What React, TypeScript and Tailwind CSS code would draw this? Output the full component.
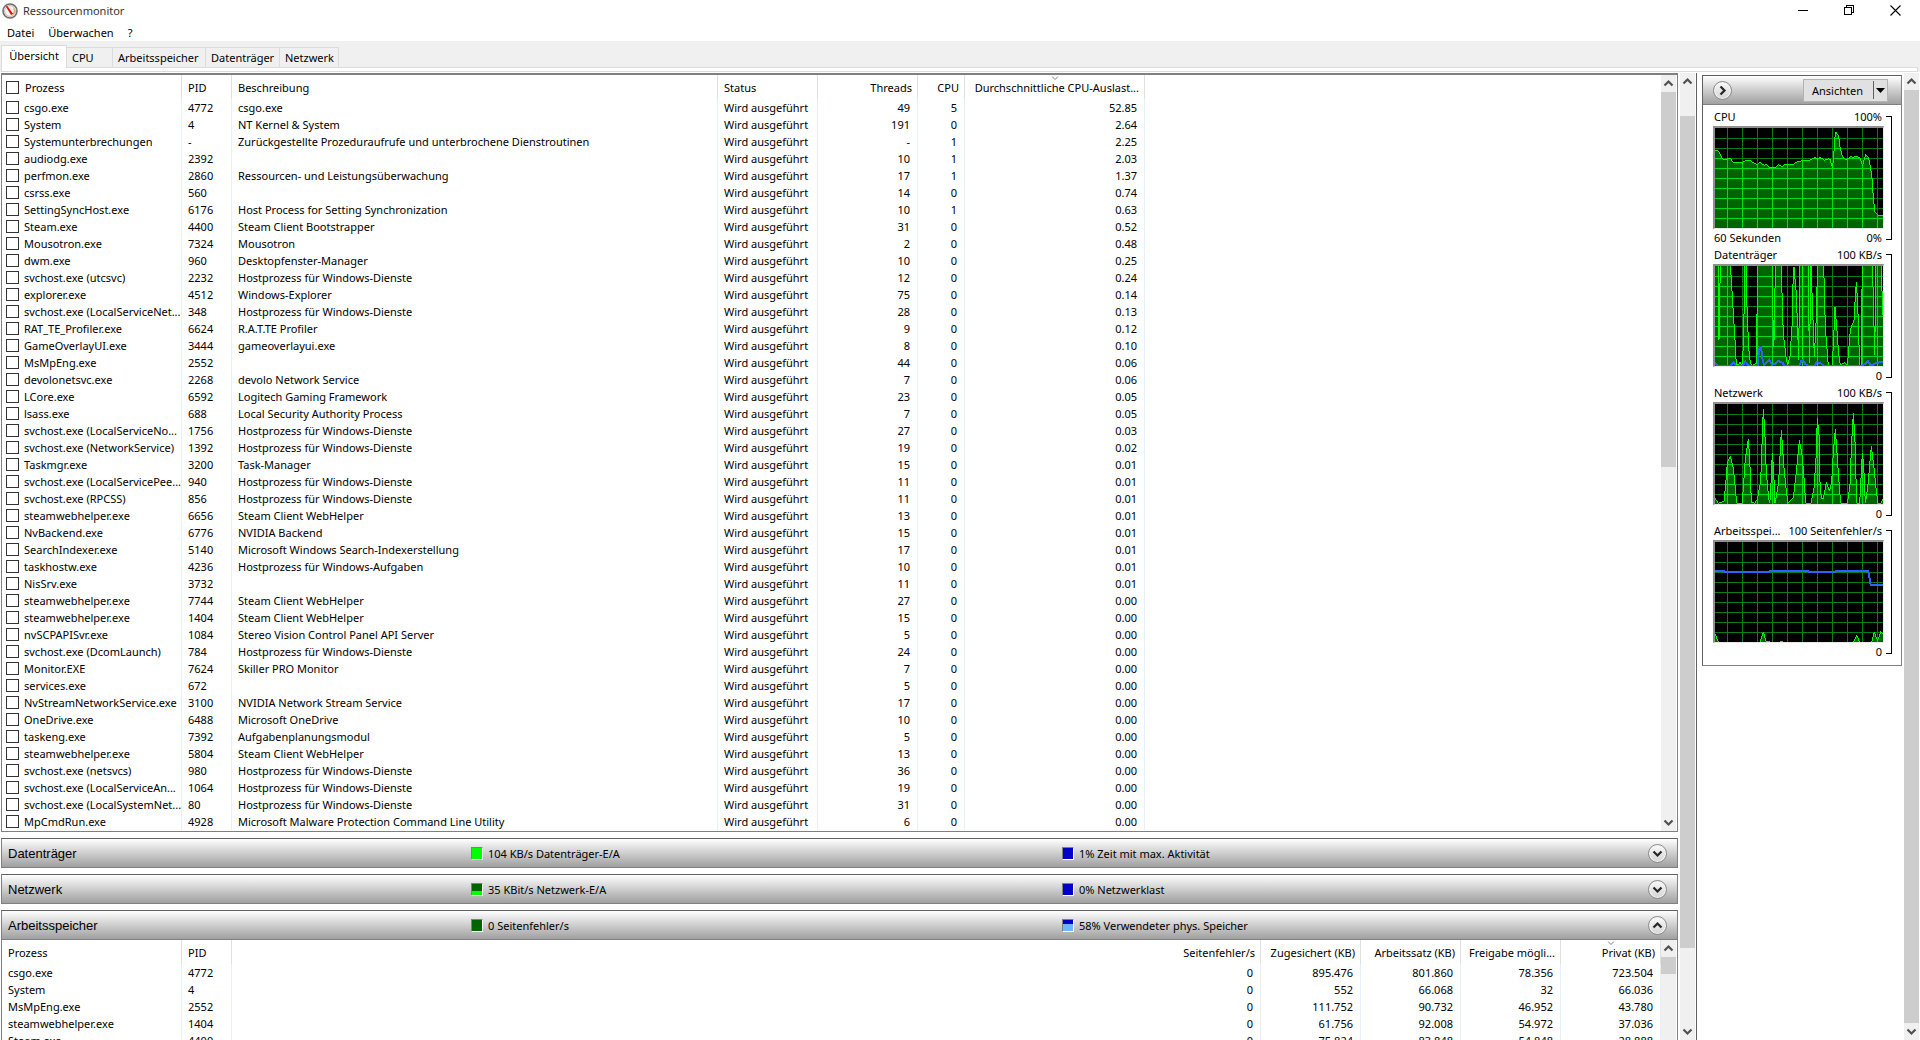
import type { ReactNode } from "react";

type Proc = [string, string, string, string, string, string];
const HP = "Hostprozess für Windows-Dienste";
const WH = "Steam Client WebHelper";

const processes: Proc[] = [
  ["csgo.exe", "4772", "csgo.exe", "49", "5", "52.85"],
  ["System", "4", "NT Kernel & System", "191", "0", "2.64"],
  ["Systemunterbrechungen", "-", "Zurückgestellte Prozeduraufrufe und unterbrochene Dienstroutinen", "-", "1", "2.25"],
  ["audiodg.exe", "2392", "", "10", "1", "2.03"],
  ["perfmon.exe", "2860", "Ressourcen- und Leistungsüberwachung", "17", "1", "1.37"],
  ["csrss.exe", "560", "", "14", "0", "0.74"],
  ["SettingSyncHost.exe", "6176", "Host Process for Setting Synchronization", "10", "1", "0.63"],
  ["Steam.exe", "4400", "Steam Client Bootstrapper", "31", "0", "0.52"],
  ["Mousotron.exe", "7324", "Mousotron", "2", "0", "0.48"],
  ["dwm.exe", "960", "Desktopfenster-Manager", "10", "0", "0.25"],
  ["svchost.exe (utcsvc)", "2232", HP, "12", "0", "0.24"],
  ["explorer.exe", "4512", "Windows-Explorer", "75", "0", "0.14"],
  ["svchost.exe (LocalServiceNet...", "348", HP, "28", "0", "0.13"],
  ["RAT_TE_Profiler.exe", "6624", "R.A.T.TE Profiler", "9", "0", "0.12"],
  ["GameOverlayUI.exe", "3444", "gameoverlayui.exe", "8", "0", "0.10"],
  ["MsMpEng.exe", "2552", "", "44", "0", "0.06"],
  ["devolonetsvc.exe", "2268", "devolo Network Service", "7", "0", "0.06"],
  ["LCore.exe", "6592", "Logitech Gaming Framework", "23", "0", "0.05"],
  ["lsass.exe", "688", "Local Security Authority Process", "7", "0", "0.05"],
  ["svchost.exe (LocalServiceNo...", "1756", HP, "27", "0", "0.03"],
  ["svchost.exe (NetworkService)", "1392", HP, "19", "0", "0.02"],
  ["Taskmgr.exe", "3200", "Task-Manager", "15", "0", "0.01"],
  ["svchost.exe (LocalServicePee...", "940", HP, "11", "0", "0.01"],
  ["svchost.exe (RPCSS)", "856", HP, "11", "0", "0.01"],
  ["steamwebhelper.exe", "6656", WH, "13", "0", "0.01"],
  ["NvBackend.exe", "6776", "NVIDIA Backend", "15", "0", "0.01"],
  ["SearchIndexer.exe", "5140", "Microsoft Windows Search-Indexerstellung", "17", "0", "0.01"],
  ["taskhostw.exe", "4236", "Hostprozess für Windows-Aufgaben", "10", "0", "0.01"],
  ["NisSrv.exe", "3732", "", "11", "0", "0.01"],
  ["steamwebhelper.exe", "7744", WH, "27", "0", "0.00"],
  ["steamwebhelper.exe", "1404", WH, "15", "0", "0.00"],
  ["nvSCPAPISvr.exe", "1084", "Stereo Vision Control Panel API Server", "5", "0", "0.00"],
  ["svchost.exe (DcomLaunch)", "784", HP, "24", "0", "0.00"],
  ["Monitor.EXE", "7624", "Skiller PRO Monitor", "7", "0", "0.00"],
  ["services.exe", "672", "", "5", "0", "0.00"],
  ["NvStreamNetworkService.exe", "3100", "NVIDIA Network Stream Service", "17", "0", "0.00"],
  ["OneDrive.exe", "6488", "Microsoft OneDrive", "10", "0", "0.00"],
  ["taskeng.exe", "7392", "Aufgabenplanungsmodul", "5", "0", "0.00"],
  ["steamwebhelper.exe", "5804", WH, "13", "0", "0.00"],
  ["svchost.exe (netsvcs)", "980", HP, "36", "0", "0.00"],
  ["svchost.exe (LocalServiceAn...", "1064", HP, "19", "0", "0.00"],
  ["svchost.exe (LocalSystemNet...", "80", HP, "31", "0", "0.00"],
  ["MpCmdRun.exe", "4928", "Microsoft Malware Protection Command Line Utility", "6", "0", "0.00"],
];

const memory = [
  ["csgo.exe", "4772", "0", "895.476", "801.860", "78.356", "723.504"],
  ["System", "4", "0", "552", "66.068", "32", "66.036"],
  ["MsMpEng.exe", "2552", "0", "111.752", "90.732", "46.952", "43.780"],
  ["steamwebhelper.exe", "1404", "0", "61.756", "92.008", "54.972", "37.036"],
  ["Steam.exe", "4400", "0", "75.824", "83.848", "54.848", "28.888"],
];

function Chevron({ dir, className = "text-[#505050]" }: { dir: "up" | "down" | "right"; className?: string }) {
  const d = { up: "M1.5 7.5 5.5 3.5 9.5 7.5", down: "M1.5 3.5 5.5 7.5 9.5 3.5", right: "M3.5 1.5 7.5 5.5 3.5 9.5" }[dir];
  return (
    <svg viewBox="0 0 11 11" className={`size-[11px] ${className}`} fill="none" stroke="currentColor" strokeWidth="2.2">
      <path d={d} />
    </svg>
  );
}

function SortMark() {
  return (
    <svg viewBox="0 0 7 4" className="absolute left-1/2 top-px h-1 w-[7px] -translate-x-1/2" fill="none" stroke="#808080">
      <path d="M.5 .5 3.5 3.5 6.5 .5" />
    </svg>
  );
}

function ScrollBar({ children, down = true }: { children: ReactNode; down?: boolean }) {
  return (
    <div className="flex w-[15px] shrink-0 flex-col bg-[#f0f0f0]">
      <button aria-label="Nach oben" className="grid h-[17px] shrink-0 place-items-center">
        <Chevron dir="up" />
      </button>
      <div className="flex min-h-0 flex-1 flex-col">{children}</div>
      {down && (
        <button aria-label="Nach unten" className="grid h-[17px] shrink-0 place-items-center">
          <Chevron dir="down" />
        </button>
      )}
    </div>
  );
}

function RoundButton({ dir, label }: { dir: "up" | "down" | "right"; label: string }) {
  return (
    <button
      aria-label={label}
      className="grid size-[19px] shrink-0 place-items-center rounded-full border border-[#8a8a8a] bg-linear-to-b from-[#fafafa] to-[#d4d4d4] shadow-[inset_0_0_0_1px_#f4f4f4]"
    >
      <Chevron dir={dir} className="text-[#262626]" />
    </button>
  );
}

const box = "block size-[13px] shrink-0 appearance-none border border-[#333] bg-white";
const headSep = "border-r border-[#e0e0e0]";
const bodySep = "border-r border-[#e6f0fa]";

function ProcessTable() {
  const right = ["Threads", "CPU", "Durchschnittliche CPU-Auslast..."];
  return (
    <div className="flex shrink-0 border border-t-2 border-[#808080] bg-white pr-px">
      <div className="min-w-0 flex-1 overflow-hidden pb-px">
        <table className="w-[1143px] table-fixed border-separate border-spacing-0 whitespace-nowrap">
          <colgroup>
            <col className="w-[180px]" />
            <col className="w-[50px]" />
            <col className="w-[486px]" />
            <col className="w-[100px]" />
            <col className="w-[100px]" />
            <col className="w-[47px]" />
            <col className="w-[180px]" />
          </colgroup>
          <thead>
            <tr className="h-6">
              <th className={`p-0 pl-1 text-left font-normal ${headSep}`}>
                <label className="flex items-center gap-1.5">
                  <input type="checkbox" className={box} />
                  Prozess
                </label>
              </th>
              {["PID", "Beschreibung", "Status"].map((h) => (
                <th key={h} className={`p-0 pl-1.5 text-left font-normal ${headSep}`}>{h}</th>
              ))}
              {right.map((h, i) => (
                <th key={h} className={`relative p-0 pr-[5px] text-right font-normal ${headSep}`}>
                  {i === 2 && <SortMark />}
                  {h}
                </th>
              ))}
            </tr>
          </thead>
          <tbody>
            {processes.map((p) => (
              <tr key={p[1]} className="h-[17px]">
                <td className={`p-0 pl-1 ${bodySep}`}>
                  <label className="flex items-center gap-[5px]">
                    <input type="checkbox" className={box} />
                    {p[0]}
                  </label>
                </td>
                <td className={`p-0 pl-1.5 ${bodySep}`}>{p[1]}</td>
                <td className={`p-0 pl-1.5 ${bodySep}`}>{p[2]}</td>
                <td className={`p-0 pl-1.5 ${bodySep}`}>Wird ausgeführt</td>
                {p.slice(3).map((v, i) => (
                  <td key={i} className={`p-0 pr-[7px] text-right ${bodySep}`}>{v}</td>
                ))}
              </tr>
            ))}
          </tbody>
        </table>
      </div>
      <ScrollBar>
        <div className="h-[52%] bg-[#cdcdcd]" />
      </ScrollBar>
    </div>
  );
}

function MemoryTable() {
  const heads = ["Seitenfehler/s", "Zugesichert (KB)", "Arbeitssatz (KB)", "Freigabe mögli...", "Privat (KB)"];
  return (
    <div className="flex min-h-0 flex-1 overflow-hidden border-x border-[#808080] bg-white pr-px">
      <div className="min-w-0 flex-1">
        <table className="w-full table-fixed border-separate border-spacing-0 whitespace-nowrap">
          <colgroup>
            <col className="w-[180px]" />
            <col className="w-[50px]" />
            <col />
            <col className="w-[100px]" />
            <col className="w-[100px]" />
            <col className="w-[100px]" />
            <col className="w-[100px]" />
          </colgroup>
          <thead>
            <tr className="h-6">
              {["Prozess", "PID"].map((h) => (
                <th key={h} className={`p-0 pl-1.5 text-left font-normal ${headSep}`}>{h}</th>
              ))}
              {heads.map((h, i) => (
                <th key={h} className={`relative p-0 pr-[5px] text-right font-normal ${headSep}`}>
                  {i === 4 && <SortMark />}
                  {h}
                </th>
              ))}
            </tr>
          </thead>
          <tbody>
            {memory.map((m) => (
              <tr key={m[0]} className="h-[17px]">
                {m.map((v, i) => (
                  <td key={i} className={i < 2 ? `p-0 pl-1.5 ${bodySep}` : `p-0 pr-[7px] text-right ${bodySep}`}>{v}</td>
                ))}
              </tr>
            ))}
          </tbody>
        </table>
      </div>
      <ScrollBar down={false}>
        <div className="h-[17px] bg-[#cdcdcd]" />
      </ScrollBar>
    </div>
  );
}

function Swatch({ base, level, fill }: { base: string; level: string; fill: string }) {
  return (
    <span className={`flex h-[13px] w-3 flex-col justify-end border border-[#808080] border-r-white border-b-white ${base}`}>
      <span className={`${level} ${fill}`} />
    </span>
  );
}

function Bar({ title, io, use, open = false }: { title: string; io: ReactNode; use: ReactNode; open?: boolean }) {
  return (
    <div className="grid h-[30px] shrink-0 grid-cols-[469fr_591fr_615fr] items-center border border-[#808080] border-t-[#606060] bg-linear-to-b from-white to-[#a0a0a0]">
      <h2 className="pl-1.5 font-['Liberation_Sans',sans-serif] text-[13px]">{title}</h2>
      <div className="flex items-center gap-[5px]">{io}</div>
      <div className="flex items-center justify-between pr-2.5">
        <div className="flex items-center gap-[5px]">{use}</div>
        <RoundButton dir={open ? "up" : "down"} label={`${title} ${open ? "zuklappen" : "aufklappen"}`} />
      </div>
    </div>
  );
}

interface GraphProps {
  id: string;
  title: string;
  max: string;
  left?: string;
  min: string;
  ox: number;
  oy: number;
  green: string;
  blue?: string;
}

const vertical = Array.from({ length: 11 }, (_, i) => 12 + i * 15);
const horizontal = Array.from({ length: 9 }, (_, i) => 10 + i * 10);

function Grid({ color, clip }: { color: string; clip?: string }) {
  return (
    <g fill={color} clipPath={clip}>
      {vertical.map((x) => <rect key={x} x={x} y="0" width="1" height="100" />)}
      {horizontal.map((y) => <rect key={y} x="0" y={y} width="168" height="1" />)}
    </g>
  );
}

function Graph({ id, title, max, left, min, ox, oy, green, blue }: GraphProps) {
  const area = `${ox},${oy + 310} ${green} ${ox + 510},${oy + 310}`;
  const t = `scale(0.33333) translate(${-ox} ${-oy})`;
  return (
    <section className="flex h-[138px] pl-[10px]">
      <div className="w-[171px]">
        <div className="flex h-[19px] items-center justify-between pl-px pr-0.5 whitespace-nowrap">
          <h3>{title}</h3>
          <span>{max}</span>
        </div>
        <div className="h-[103px] border-t-2 border-l-2 border-r border-b border-[#909090] border-r-[#e8e8e8] border-b-[#e8e8e8] bg-black">
          <svg viewBox="0 0 168 100" className="block size-full" preserveAspectRatio="none" shapeRendering="crispEdges">
            <clipPath id={id}>
              <polygon points={area} transform={t} />
            </clipPath>
            <Grid color="#0a7d14" />
            <polygon points={area} transform={t} fill="#006400" />
            <Grid color="#00dc1e" clip={`url(#${id})`} />
            <polyline points={green} transform={t} fill="none" stroke="#00ff00" strokeWidth="3" />
            {blue && <polyline points={blue} transform={t} fill="none" stroke="#2f62ff" strokeWidth="6" />}
          </svg>
        </div>
        <div className="flex h-4 items-center justify-between pl-px pr-0.5">
          <span>{left}</span>
          <span>{min}</span>
        </div>
      </div>
      <div className="mt-[9px] ml-0.5 h-[124px] w-1.5 border border-l-0 border-black" />
    </section>
  );
}

const cpuLine =
  "345,452 355,452 365,473 373,480 390,474 402,489 420,489 438,482 450,482 472,494 481,487 492,496 500,494 508,503 526,503 535,494 545,500 555,494 580,493 590,486 608,482 630,480 643,473 652,475 663,473 673,481 685,476 690,478 697,503 700,480 703,440 706,395 716,407 720,440 727,468 735,478 745,476 752,470 760,472 770,469 780,474 788,498 792,480 797,463 806,474 812,505 817,540 819,580 824,635 830,643 840,648 852,646";
const diskLine =
  "13,17 25,17 27,240 31,17 61,17 64,60 70,160 75,240 79,317 86,312 90,307 96,317 100,260 105,17 108,17 112,180 118,290 124,317 140,310 142,17 187,17 190,260 193,230 196,17 214,17 218,180 222,240 228,290 233,317 240,290 246,200 250,30 252,20 258,90 262,180 266,300 269,17 277,17 278,300 279,17 295,17 298,310 303,17 308,150 313,290 320,150 322,17 341,17 346,200 352,280 355,317 366,317 370,260 375,140 380,200 386,280 391,317 400,310 406,308 412,317 421,210 432,180 436,110 439,66 443,130 449,317 453,317 457,17 487,17 490,110 494,285 498,17 513,17 519,165";
const diskBlue =
  "15,306 22,317 62,317 70,307 78,317 98,317 106,305 116,317 143,317 145,290 149,262 153,262 158,300 162,314 172,306 178,300 186,314 196,312 204,302 210,306 218,308 222,317 268,317 274,303 278,300 286,312 294,317 314,317 320,307 330,308 340,317 455,317 465,312 474,303 482,317 490,314 498,308 519,307";
const netLine =
  "15,300 25,316 42,309 47,260 52,195 61,175 70,210 75,260 80,316 96,316 100,270 106,180 115,124 119,180 124,312 134,316 142,305 152,250 157,110 160,33 164,90 169,225 175,290 178,316 181,300 187,165 191,220 195,316 200,290 206,250 214,97 222,210 228,270 234,316 250,300 258,230 264,170 268,127 276,170 281,225 287,316 303,316 312,270 318,180 322,60 327,110 330,250 334,300 340,303 349,253 358,280 365,255 370,160 376,94 382,180 386,240 392,316 412,316 420,260 425,130 430,45 435,130 440,316 449,316 453,240 457,165 461,200 466,316 474,260 484,144 492,210 498,270 504,316 512,316 519,303";
const memLine =
  "75,372 86,397 210,397 220,366 229,397 234,393 240,397 270,397 275,393 280,397 490,397 500,376 509,397 545,397 553,366 561,388 566,385 572,364 580,372";
const memBlue =
  "75,184 103,184 104,187 238,187 240,184 355,184 356,187 436,187 437,184 534,184 538,200 542,225 580,225";

export default function App() {
  return (
    <div className="flex h-screen flex-col overflow-hidden bg-white font-['Noto_Sans',sans-serif] text-[11px] leading-[13px] text-black">
      <header className="flex h-[22px] shrink-0 items-start justify-between">
        <div className="flex gap-[5px] pt-[3px] pl-0.5">
          <svg viewBox="0 0 16 16" className="size-4">
            <circle cx="8" cy="8" r="7" fill="#f6f4f2" stroke="#6f6f6f" strokeWidth="1.6" />
            <circle cx="8" cy="8" r="5.4" fill="none" stroke="#c9b8b0" />
            <path d="M11.5 5.5a4.4 4.4 0 0 1-.4 5.6" fill="none" stroke="#e39a6a" strokeWidth="1.2" />
            <path d="M3.8 3.6 5.4 3 11.2 11 9 12z" fill="#d8170f" />
          </svg>
          <h1 className="pt-px text-[#333]">Ressourcenmonitor</h1>
        </div>
        <div className="flex gap-[35px] pt-[5px] pr-[19px]">
          <button aria-label="Minimieren">
            <svg viewBox="0 0 11 11" className="size-[11px]" stroke="#000" shapeRendering="crispEdges"><path d="M0 5.5H10" /></svg>
          </button>
          <button aria-label="Wiederherstellen">
            <svg viewBox="0 0 11 11" className="size-[11px]" fill="none" stroke="#000" shapeRendering="crispEdges">
              <path d="M.5 2.5h7v7h-7zM2.5 2.5v-2h7v7h-2" />
            </svg>
          </button>
          <button aria-label="Schließen">
            <svg viewBox="0 0 11 11" className="size-[11px]" stroke="#000" strokeWidth="1.1"><path d="M.5 .5 10.5 10.5M10.5 .5 .5 10.5" /></svg>
          </button>
        </div>
      </header>
      <nav className="flex h-[19px] shrink-0 items-center gap-3.5 pl-[7px] pb-0.5 pt-1">
        <button>Datei</button>
        <button>Überwachen</button>
        <button>?</button>
      </nav>
      <div role="tablist" className="flex h-[26px] shrink-0 items-end bg-[#f0f0f0] pl-px">
        <button role="tab" aria-selected="true" className="relative z-10 -mb-px h-[23px] w-[66px] border border-b-0 border-[#dcdcdc] bg-white pb-1">Übersicht</button>
        <button role="tab" className="h-5 w-[46px] border-t border-r border-[#dcdcdc] pl-[5px] text-left">CPU</button>
        <button role="tab" className="h-5 w-[93px] border-t border-r border-[#dcdcdc] pl-[5px] text-left">Arbeitsspeicher</button>
        <button role="tab" className="h-5 w-[74px] border-t border-r border-[#dcdcdc] pl-[5px] text-left">Datenträger</button>
        <button role="tab" className="h-5 w-[59px] border-t border-r border-[#dcdcdc] pl-[5px] text-left">Netzwerk</button>
      </div>
      <div className="flex shrink-0 bg-[#f0f0f0] pl-px pr-0.5">
        <div className="h-[5px] flex-1 border border-[#dcdcdc] bg-white" />
      </div>
      <main className="flex min-h-0 flex-1 pt-px">
        <div className="flex min-w-0 flex-1 flex-col gap-1.5 pl-px">
          <ProcessTable />
          <Bar
            title="Datenträger"
            io={<><Swatch base="bg-[#006400]" level="h-full" fill="bg-[#00ff00]" />104 KB/s Datenträger-E/A</>}
            use={<><Swatch base="bg-[#0000c8]" level="h-0" fill="bg-[#6eb4ff]" />1% Zeit mit max. Aktivität</>}
          />
          <Bar
            title="Netzwerk"
            io={<><Swatch base="bg-[#006400]" level="h-1" fill="bg-[#00ff00]" />35 KBit/s Netzwerk-E/A</>}
            use={<><Swatch base="bg-[#0000c8]" level="h-0" fill="bg-[#6eb4ff]" />0% Netzwerklast</>}
          />
          <div className="flex min-h-0 flex-1 flex-col">
            <Bar
              title="Arbeitsspeicher"
              open
              io={<><Swatch base="bg-[#006400]" level="h-0" fill="bg-[#00ff00]" />0 Seitenfehler/s</>}
              use={<><Swatch base="bg-[#0000c8]" level="h-[7px]" fill="bg-[#6eb4ff]" />58% Verwendeter phys. Speicher</>}
            />
            <MemoryTable />
          </div>
        </div>
        <div className="ml-0.5 flex border-r border-[#606060] pr-px">
          <ScrollBar>
            <div className="h-[26px] shrink-0" />
            <div className="min-h-0 flex-1 bg-[#cdcdcd]" />
            <div className="h-[8%] shrink-0" />
          </ScrollBar>
        </div>
        <aside className="flex shrink-0">
          <div className="w-[205px] pt-0.5 pl-[5px]">
            <div className="w-[200px] border border-[#808080] border-l-[#606060] border-t-[#606060] pb-1.5">
              <div className="flex h-[29px] items-center justify-between border-b border-[#808080] bg-linear-to-b from-white to-[#a0a0a0] pr-[13px] pl-2.5">
                <RoundButton dir="right" label="Diagramme ausblenden" />
                <button className="flex h-[23px] items-center border border-[#b4b4b4] bg-[#e1e1e1] pl-2 pr-0.5">
                  Ansichten
                  <span className="ml-2.5 flex h-[18px] items-center border-l border-[#606060] pl-0.5">
                    <svg viewBox="0 0 9 5" className="h-[5px] w-[9px]"><path d="M0 0H9L4.5 5z" /></svg>
                  </span>
                </button>
              </div>
              <div className="pt-0.5">
                <Graph id="cpu" title="CPU" max="100%" left="60 Sekunden" min="0%" ox={345} oy={384} green={cpuLine} />
                <Graph id="disk" title="Datenträger" max="100 KB/s" min="0" ox={15} oy={18} green={diskLine} blue={diskBlue} />
                <Graph id="net" title="Netzwerk" max="100 KB/s" min="0" ox={15} oy={18} green={netLine} />
                <Graph id="mem" title="Arbeitsspei..." max="100 Seitenfehler/s" min="0" ox={75} oy={96} green={memLine} blue={memBlue} />
              </div>
            </div>
          </div>
          <div className="flex pl-0.5 pr-px">
            <ScrollBar>
              <div className="flex-1 bg-[#cdcdcd]" />
            </ScrollBar>
          </div>
        </aside>
      </main>
    </div>
  );
}
